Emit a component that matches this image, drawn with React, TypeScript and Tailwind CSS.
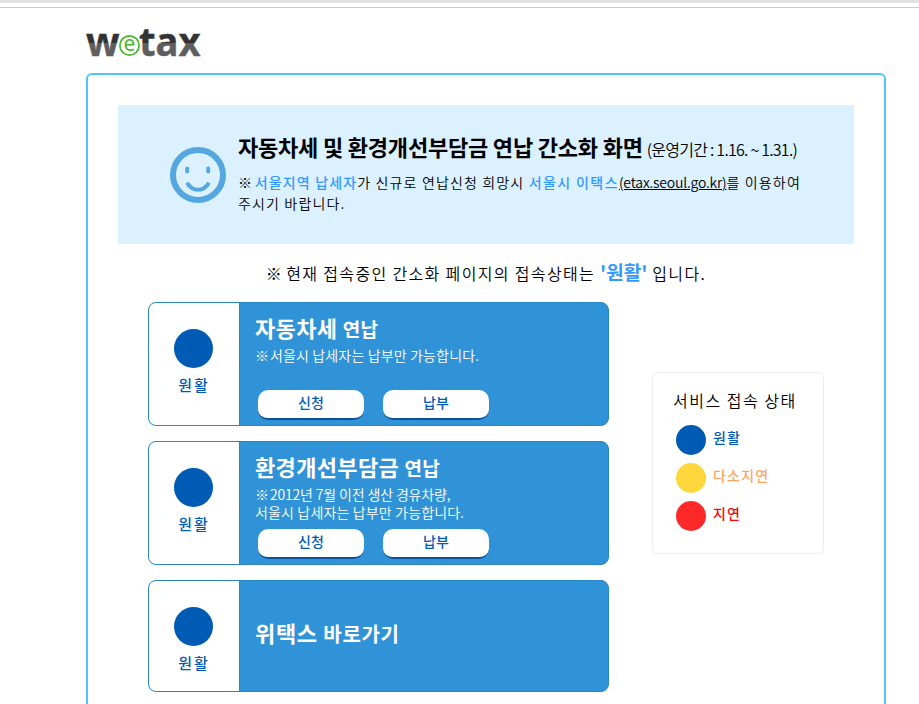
import type { ReactNode } from 'react';

function Logo() {
	return (
		<svg width="130" height="64" viewBox="0 -20 130 64" className="block overflow-visible font-['Noto_Sans']" role="img" aria-label="wetax">
			<defs>
				<linearGradient id="ink" gradientUnits="userSpaceOnUse" x1="0" y1="0" x2="0" y2="34">
					<stop offset="0.48" stopColor="#333333" />
					<stop offset="0.48" stopColor="#5e5e5e" />
				</linearGradient>
			</defs>
			<text x="0" y="29" fontSize="40" fontWeight="700" fill="url(#ink)" stroke="url(#ink)" strokeWidth="0.4" textLength="33.5" lengthAdjust="spacingAndGlyphs">
				w
			</text>
			<text x="53" y="29" fontSize="40" fontWeight="700" fill="url(#ink)" stroke="url(#ink)" strokeWidth="0.4" textLength="61.5" lengthAdjust="spacingAndGlyphs">
				tax
			</text>
			<circle cx="43.5" cy="18.5" r="9.6" fill="#fff" stroke="#4cb531" strokeWidth="1.7" />
			<text x="43.5" y="24.3" fontSize="21" fontWeight="400" textAnchor="middle" fill="#4cb531">
				e
			</text>
		</svg>
	);
}

function Smile() {
	return (
		<svg width="56" height="56" viewBox="0 0 56 56" fill="none" stroke="#54a7e0" className="shrink-0">
			<circle cx="28" cy="28" r="25" strokeWidth="6" />
			<path d="M17.2 21.4v3.2M38.2 21.4v3.2" strokeWidth="4" strokeLinecap="round" />
			<path d="M17 35.8c5.5 9.4 16.5 9.4 22 0" strokeWidth="4" />
		</svg>
	);
}

function Card({ height, children }: { height: string; children: ReactNode }) {
	return (
		<div className={`flex overflow-hidden rounded-lg border border-[#2787c7] bg-[#3193d7] ${height}`}>
			<div className="flex w-[91px] shrink-0 flex-col items-center border-r border-[#2787c7] bg-white pt-[26px] pr-px">
				<span className="size-[39px] rounded-full bg-[#005bb5]" />
				<span className="mt-[5px] pl-px text-[15px] leading-6 font-medium tracking-[1.9px] text-[#005bb5]">원활</span>
			</div>
			<div className="flex-1 pl-[15px] text-white">{children}</div>
		</div>
	);
}

function Buttons() {
	return (
		<div className="flex gap-[19px] pl-[3px]">
			{['신청', '납부'].map((label) => (
				<button
					key={label}
					className="h-[30px] w-[106px] rounded-[10px] border-b-2 border-[#0b519b] bg-white pb-1 text-[14px] leading-none font-medium text-[#005bb5]">
					{label}
				</button>
			))}
		</div>
	);
}

export default function App() {
	const states = [
		{ label: '원활', dot: 'bg-[#005bb5]', text: 'text-[#005bb5]' },
		{ label: '다소지연', dot: 'bg-[#ffd63b]', text: 'text-[#ffa564]' },
		{ label: '지연', dot: 'bg-[#ff2929]', text: 'text-[#ff0000]' },
	];

	return (
		<div className="h-[704px] overflow-hidden bg-white font-['Noto_Sans_CJK_KR',sans-serif] font-[350] whitespace-nowrap text-black">
			<div className="h-[3px] bg-[#e1e1e1]" />
			<div className="mt-1 h-px bg-[#cccccc]" />
			<header className="flex h-[65px] items-center pb-[3px] pl-[86px]">
				<Logo />
			</header>

			<main className="ml-[86px] h-[700px] w-[800px] rounded-md border-2 border-[#56c3fb] px-[30px] pt-[30px]">
				<section className="flex h-[139px] bg-[#dbf1ff] pl-[52px]">
					<div className="pt-[42px]">
						<Smile />
					</div>
					<div className="pt-[25px] pl-3">
						<h1 className="flex items-baseline text-[22px] leading-8 font-bold tracking-[-0.2px]">
							자동차세 및 환경개선부담금 연납 간소화 화면
							<span className="ml-1 text-[16px] font-[350] tracking-[-0.75px]">(운영기간 : 1.16. ~ 1.31.)</span>
						</h1>
						<p className="mt-[7px] text-[14px] leading-[21px] tracking-[1.15px]">
							<span className="tracking-[-0.2px]">※ </span>
							<b className="font-medium text-[#3399ff]">서울지역 납세자</b>가 신규로 연납신청 희망시{' '}
							<b className="font-medium tracking-[1.4px] text-[#3399ff]">서울시 이택스</b>
							<a className="tracking-[-0.2px] underline">(etax.seoul.go.kr)</a>를 이용하여
							<br />
							주시기 바랍니다.
						</p>
					</div>
				</section>

				<p className="mt-[14px] text-center text-[16px] leading-7 tracking-[1.35px]">
					<span className="tracking-[0.4px]">※ </span>현재 접속중인 간소화 페이지의 접속상태는{' '}
					<b className="text-[19px] tracking-normal text-[#3399ff]">'원활'</b> 입니다.
				</p>

				<div className="mt-[15px] flex pl-[30px]">
					<div className="flex w-[461px] flex-col gap-[15px]">
						<Card height="h-[124px]">
							<h2 className="pt-2 text-[22px] leading-8 font-bold tracking-[0.35px]">
								자동차세 <span className="text-[19px]">연납</span>
							</h2>
							<p className="mt-px h-11 text-[14px] leading-[18px] tracking-[0.15px]">
								<span className="tracking-[-1.1px]">※ </span>서울시 납세자는 납부만 가능합니다.
							</p>
							<Buttons />
						</Card>
						<Card height="h-[124px]">
							<h2 className="pt-2 text-[22px] leading-8 font-bold tracking-[0.35px]">
								환경개선부담금 <span className="text-[19px]">연납</span>
							</h2>
							<p className="mt-px h-11 text-[14px] leading-[18px] tracking-[0.15px]">
								<span className="tracking-[-0.15px]">
									<span className="tracking-[-1.1px]">※ </span>2012년 7월 이전 생산 경유차량,
								</span>
								<br />
								서울시 납세자는 납부만 가능합니다.
							</p>
							<Buttons />
						</Card>
						<Card height="h-[112px]">
							<h2 className="pt-[35px] text-[22px] leading-8 font-bold tracking-[0.65px]">
								위택스 <span className="text-[20px]">바로가기</span>
							</h2>
						</Card>
					</div>

					<aside className="mt-[70px] ml-[43px] h-[182px] w-[172px] rounded-[5px] border border-[#eeeeee] pt-[15px] pl-5">
						<h3 className="text-[16px] leading-6 tracking-[1.5px]">서비스 접속 상태</h3>
						<ul className="mt-[13px] flex flex-col gap-2 pl-[3px]">
							{states.map((s) => (
								<li key={s.label} className="flex items-center gap-[7px]">
									<span className={`size-[30px] rounded-full ${s.dot}`} />
									<span className={`pb-1.5 text-[14px] leading-5 font-medium tracking-[1.2px] ${s.text}`}>{s.label}</span>
								</li>
							))}
						</ul>
					</aside>
				</div>
			</main>
		</div>
	);
}
